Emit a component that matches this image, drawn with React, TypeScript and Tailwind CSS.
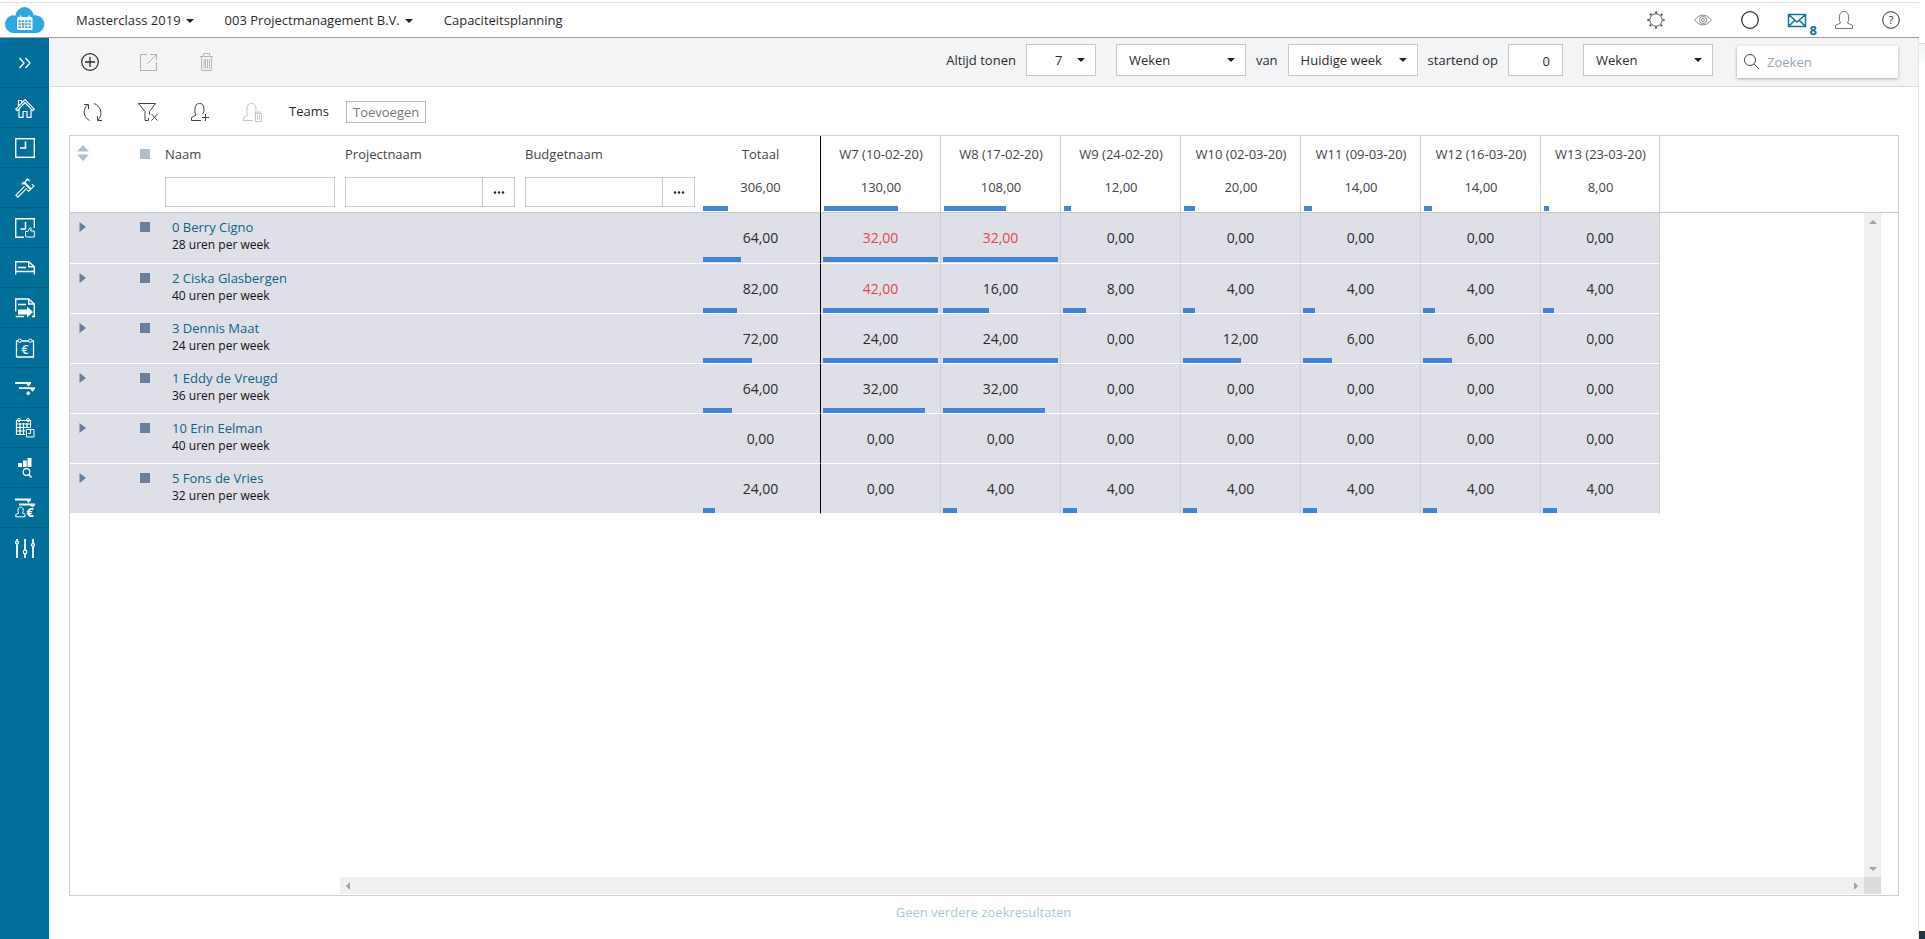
import type { ReactNode } from 'react'

const WEEKS = [
  'W7 (10-02-20)',
  'W8 (17-02-20)',
  'W9 (24-02-20)',
  'W10 (02-03-20)',
  'W11 (09-03-20)',
  'W12 (16-03-20)',
  'W13 (23-03-20)',
]

interface Employee {
  name: string
  capacity: number
  hours: number[]
}

const EMPLOYEES: Employee[] = [
  { name: '0 Berry Cigno', capacity: 28, hours: [32, 32, 0, 0, 0, 0, 0] },
  { name: '2 Ciska Glasbergen', capacity: 40, hours: [42, 16, 8, 4, 4, 4, 4] },
  { name: '3 Dennis Maat', capacity: 24, hours: [24, 24, 0, 12, 6, 6, 0] },
  { name: '1 Eddy de Vreugd', capacity: 36, hours: [32, 32, 0, 0, 0, 0, 0] },
  { name: '10 Erin Eelman', capacity: 40, hours: [0, 0, 0, 0, 0, 0, 0] },
  { name: '5 Fons de Vries', capacity: 32, hours: [0, 4, 4, 4, 4, 4, 4] },
]

const sum = (values: number[]) => values.reduce((a, b) => a + b, 0)
const format = (value: number) => value.toFixed(2).replace('.', ',')

const TOTAL_CAPACITY = sum(EMPLOYEES.map(e => e.capacity))
const WEEK_TOTALS = WEEKS.map((_, i) => sum(EMPLOYEES.map(e => e.hours[i])))

function Icon({ children, className = '' }: { children: ReactNode; className?: string }) {
  return (
    <svg viewBox="0 0 20 20" fill="none" stroke="currentColor" className={`size-5 ${className}`} aria-hidden="true">
      {children}
    </svg>
  )
}

function Caret({ className = '' }: { className?: string }) {
  return (
    <svg viewBox="0 0 8 4" className={`h-1 w-2 ${className}`} fill="#222" aria-hidden="true">
      <path d="M0 0h8L4 4z" />
    </svg>
  )
}

function Logo() {
  return (
    <svg viewBox="0 0 43 26" className="h-[26px] w-[43px]" aria-hidden="true">
      <path
        d="M9.500 26a9 9 0 0 1-1-17.500 9 9 0 0 1 4 .2A9.500 9.500 0 0 1 21.500 0a9.500 9.500 0 0 1 9.200 8.300A9 9 0 1 1 34 26z"
        fill="#29abe2"
      />
      <rect x="14" y="10" width="15.500" height="13" rx="1.500" fill="#fff" />
      <path d="M17.500 8.500v3M26 8.500v3" stroke="#fff" strokeWidth="1.500" />
      <path
        d="M15.500 14.300h12.500M15.500 17.200h12.500M15.500 20.100h12.500"
        stroke="#29abe2"
        strokeWidth="1.900"
        strokeDasharray="2.300 1"
      />
      <rect x="18.800" y="16" width="2.700" height="2.500" fill="#f47b20" />
    </svg>
  )
}

const NAV_ITEMS: { label: string; icon: ReactNode }[] = [
  {
    label: 'Start',
    icon: (
      <Icon>
        <path
          d="M.8 11.200 10 1.500l9.200 9.700-1.400 1.400L10 4.600l-7.800 8zM4 11v8.400h4V13.500h4v5.900h4V11M3.500 7.800V2.500h3v2"
          strokeWidth="1.200"
        />
      </Icon>
    ),
  },
  {
    label: 'Uren',
    icon: (
      <Icon>
        <rect x=".7" y=".7" width="18.600" height="18.600" strokeWidth="1.400" />
        <path d="M10.500 3.500V10H5" strokeWidth="1.600" />
      </Icon>
    ),
  },
  {
    label: 'Projecten',
    icon: (
      <Icon>
        <path
          d="M9.500 8.300.9 17.200l1.900 1.900 8.900-8.700M7.300 6.600 13 1M14 13.200l5-5.400M6.700 5.900l1.500-1.500 6.800 6.800M9.300 3.800l6.300 6.500M12.500.8l2.300 2.300M12.300 1l-1.500 1.500M17 6.300l2.300 1.900M14 13.500l-1.700-1.700"
          strokeWidth="1.200"
        />
      </Icon>
    ),
  },
  {
    label: 'Uren fiatteren',
    icon: (
      <Icon>
        <path d="M9 19.300H.7V.7h18.600V10" strokeWidth="1.400" />
        <path d="M10.500 4v7H5.500" strokeWidth="1.600" />
        <path d="M10.500 13.500h2.300l2.200-4 1.300.8-.6 2.700h3.600v6h-7l-1.800-.8z" />
      </Icon>
    ),
  },
  {
    label: 'Facturen',
    icon: (
      <Icon>
        <path d="M.7 16.500V3.700h13l5.600 5v7.800" strokeWidth="1.400" />
        <path d="M13.700 3.700v5h5.600M3 9.500h8M1 13.500h18" strokeWidth="1.400" />
      </Icon>
    ),
  },
  {
    label: 'Factuurvoorstellen',
    icon: (
      <Icon>
        <path d="M.7 13.500V1h13l5.600 5v12.500H17M.7 18.500H9" strokeWidth="1.400" />
        <path d="M13.700 1v5h5.600M3 6.500h8" strokeWidth="1.400" />
        <path d="M3 11.500h9V8.500l6 5.500-6 5.500v-3H3z" fill="currentColor" stroke="none" />
      </Icon>
    ),
  },
  {
    label: 'Kosten',
    icon: (
      <Icon>
        <path d="M3 3H1.500v16h17V3H17M6.500 3h7" strokeWidth="1.300" />
        <circle cx="4.700" cy="2.700" r="1.700" />
        <circle cx="15.300" cy="2.700" r="1.700" />
        <text x="10" y="16" textAnchor="middle" fontSize="12" fontWeight="600" fill="currentColor" stroke="none">
          €
        </text>
      </Icon>
    ),
  },
  {
    label: 'Planning',
    icon: (
      <Icon>
        <path d="M0 5h16M4 10.200h16" strokeWidth="1.800" />
        <path
          d="M11 5.500h5L13.500 8.500zM15 11h5l-2.500 2.800zM13.200 13l2.300 2.300-2.300 2.200-2.200-2.200z"
          fill="currentColor"
          stroke="none"
        />
      </Icon>
    ),
  },
  {
    label: 'Kalender',
    icon: (
      <Icon>
        <path
          d="M1.500 16.500v-14h14v7M1.500 6h14M1.500 9.500h14M1.500 13h9M1.500 16.500h9M5 5v11.500M8.500 5v11.500M12 5v5"
          strokeWidth="1.200"
        />
        <circle cx="4" cy="2" r="1.500" />
        <circle cx="13" cy="2" r="1.500" />
        <path d="M11.500 11.500h7.500v7.500h-7.500zM15.500 12v3.500h-2.500" />
      </Icon>
    ),
  },
  {
    label: 'Analyse',
    icon: (
      <Icon>
        <path d="M3 5h4v4H3zM8 2.500h3.700V9H8zM12.500 0h4v9h-4z" fill="currentColor" stroke="none" />
        <circle cx="11.500" cy="14" r="3.300" strokeWidth="1.200" />
        <path d="m13.800 16.500 2.700 3" strokeWidth="1.500" />
      </Icon>
    ),
  },
  {
    label: 'Capaciteit',
    icon: (
      <Icon className="overflow-visible">
        <path d="M0 1.500h16M4 6.500h16" strokeWidth="1.800" />
        <path d="M11 2h5l-2.500 3zM15 7h5l-2.500 2.500z" fill="currentColor" stroke="none" />
        <path d="M.8 18.800v-2.300l3-1.500a4 4 0 0 1-.8-2.800c0-2 1-3 2.600-3s2.600 1 2.600 3a4 4 0 0 1-.8 2.800l2.600 1.300v2.500z" />
        <text x="15" y="18.500" textAnchor="middle" fontSize="13" fontWeight="700" fill="currentColor" stroke="none">
          €
        </text>
      </Icon>
    ),
  },
  {
    label: 'Instellingen',
    icon: (
      <Icon>
        <path d="M2 6.500V20M2 1v1.500M10 1v11M10 16v4M18 1v4M18 9v11" strokeWidth="1.800" />
        <circle cx="2" cy="4.500" r="1.500" strokeWidth="1.300" />
        <circle cx="10" cy="14" r="1.800" strokeWidth="1.300" />
        <circle cx="18" cy="7" r="1.500" strokeWidth="1.300" />
      </Icon>
    ),
  },
]

const PERSON = 'M1.500 18.500v-3l5-2.500A7 7 0 0 1 5.500 7c0-3.700 1.500-5.500 4.500-5.500s4.500 1.800 4.500 5.500a7 7 0 0 1-1 6l5 2.500v3z'
const PERSON_CUT = 'M11 18.500H1.500v-3l4.500-2.500A7 7 0 0 1 5 7c0-3.700 1.500-5.500 4.500-5.500S14 3.300 14 7a7 7 0 0 1-1.500 5.300'

function Header() {
  return (
    <header className="mt-0.5 flex h-9 items-center border-y border-t-[#dcdfe5] border-b-[#9c9c9c]">
      <a href="#" aria-label="Start" className="ml-[3px] w-[73px]">
        <Logo />
      </a>
      <div className="flex items-center gap-[31px] pt-0.5">
        <button type="button" className="flex items-center gap-[5px]">
          Masterclass 2019
          <Caret />
        </button>
        <button type="button" className="flex items-center gap-[5px]">
          003 Projectmanagement B.V.
          <Caret />
        </button>
        <span>Capaciteitsplanning</span>
      </div>
      <div className="ml-auto mr-[18px] flex items-center gap-[27px]">
        <button type="button" aria-label="Instellingen" className="text-[#444]">
          <Icon>
            <circle cx="10" cy="10" r="6.200" strokeWidth=".9" />
            <circle cx="10" cy="10" r="7.700" strokeWidth="1.800" strokeDasharray="2 4.047" strokeDashoffset="1" />
          </Icon>
        </button>
        <button type="button" aria-label="Weergave" className="text-[#8a8a8a]">
          <Icon>
            <path d="M1.500 10Q5.500 5 10 5t8.500 5q-4 5-8.500 5T1.500 10z" />
            <circle cx="10" cy="10" r="3.500" />
            <circle cx="10" cy="10" r="1.500" />
          </Icon>
        </button>
        <button type="button" aria-label="Status">
          <Icon>
            <circle cx="10" cy="10" r="8.300" strokeWidth="1.200" />
          </Icon>
        </button>
        <button type="button" aria-label="Berichten" className="relative text-[#1272a0]">
          <Icon>
            <path d="M1.500 4.500h17v12h-17zM2 5l8 7 8-7M2 16l6-6M18 16l-6-6" strokeWidth="1.500" />
          </Icon>
          <span className="absolute -right-2.5 top-3 font-bold leading-4">8</span>
        </button>
        <button type="button" aria-label="Profiel" className="text-[#777]">
          <Icon>
            <path d={PERSON} />
          </Icon>
        </button>
        <button type="button" aria-label="Help">
          <Icon>
            <circle cx="10" cy="10" r="8.300" />
            <text x="10" y="14" textAnchor="middle" fontSize="11" fill="currentColor" stroke="none">
              ?
            </text>
          </Icon>
        </button>
      </div>
    </header>
  )
}

function Sidebar() {
  return (
    <nav className="w-[49px] shrink-0 bg-[#006f99] text-white">
      <button
        type="button"
        aria-label="Menu uitklappen"
        className="flex h-[50px] w-full items-center justify-center border-b border-[#005f86]"
      >
        <Icon>
          <path d="m4.500 5 4.500 5-4.500 5M10.500 5l4.500 5-4.500 5" strokeWidth="1.300" />
        </Icon>
      </button>
      {NAV_ITEMS.map(item => (
        <a
          key={item.label}
          href="#"
          aria-label={item.label}
          className="flex h-10 items-center justify-center border-b border-[#005f86] last:border-b-0"
        >
          {item.icon}
        </a>
      ))}
    </nav>
  )
}

interface SelectProps {
  label: string
  options: string[]
  className: string
  padding?: string
}

function Select({ label, options, className, padding = 'pl-3' }: SelectProps) {
  return (
    <span className={`grid h-8 items-center ${className}`}>
      <select
        aria-label={label}
        className={`col-start-1 row-start-1 h-8 w-full appearance-none border border-[#c8c8c8] bg-white pt-0.5 ${padding}`}
      >
        {options.map(option => (
          <option key={option}>{option}</option>
        ))}
      </select>
      <Caret className="pointer-events-none col-start-1 row-start-1 mr-[11px] justify-self-end" />
    </span>
  )
}

function Toolbar() {
  return (
    <div className="ml-px flex h-[49px] items-center border-b border-[#d6dbe1] bg-[#f3f4f6]">
      <div className="ml-[30px] flex items-center gap-[38px]">
        <button type="button" aria-label="Nieuw">
          <Icon>
            <circle cx="10" cy="10" r="8.300" strokeWidth="1.200" />
            <path d="M10 5v10M5 10h10" strokeWidth="1.300" />
          </Icon>
        </button>
        <button type="button" aria-label="Openen" disabled className="text-[#b0b0b0]">
          <Icon>
            <path d="M9 2.500H2.500v16h16V10M12 2.500h6.500V8M18 3 9 12" />
          </Icon>
        </button>
        <button type="button" aria-label="Verwijderen" disabled className="text-[#b8b8b8]">
          <Icon>
            <path d="M4 4.500h13M7.500 4V1.500h6V4M5.500 5v13.500h10V5M8 7v9.500M9.500 7v9.500M11.500 7v9.500M13.500 7v9.500" />
          </Icon>
        </button>
      </div>
      <div className="mb-1 ml-auto mr-5 flex items-center gap-2.5">
        <span className="pt-0.5">Altijd tonen</span>
        <Select label="Altijd tonen" options={['7']} className="w-[70px]" padding="pl-7" />
        <Select label="Eenheid" options={['Weken']} className="ml-2.5 w-[130px]" />
        <span className="pt-0.5">van</span>
        <Select label="van" options={['Huidige week']} className="w-[130px]" />
        <label htmlFor="offset" className="pt-0.5">
          startend op
        </label>
        <input
          id="offset"
          type="text"
          defaultValue="0"
          className="h-8 w-[55px] border border-[#c8c8c8] bg-white pr-3 pt-0.5 text-right"
        />
        <Select label="Eenheid startpunt" options={['Weken']} className="ml-2.5 w-[130px]" />
        <div className="ml-3.5 mt-[3px] flex h-8 w-[161px] items-center bg-white pl-1.5 shadow-[0_1px_3px_#aaa]">
          <Icon className="shrink-0 text-[#444]">
            <circle cx="7" cy="8" r="5.500" />
            <path d="m11 12 5 5" />
          </Icon>
          <input
            type="search"
            aria-label="Zoeken"
            placeholder="Zoeken"
            className="ml-1 w-full min-w-0 pt-0.5 outline-none placeholder:text-[#94a3b8]"
          />
        </div>
      </div>
    </div>
  )
}

function FilterBar() {
  return (
    <div className="flex h-12 items-center pl-[34px] pt-0.5">
      <button type="button" aria-label="Vernieuwen" className="text-[#444]">
        <Icon>
          <path d="M4.500 3C-.5 7 0 15 6.500 18.500M15 18C20 13.500 18.500 4 11 1.500M1 2.500h4.500V7M19 18.500h-4.500V14" />
        </Icon>
      </button>
      <button type="button" aria-label="Filter wissen" className="ml-[35px] text-[#444]">
        <Icon>
          <path d="M.5 1.500h17L11.500 9.500v3M.5 1.500 7 9.500v9h3.500v-2.500M13.500 12l6 6.500M19.500 12l-6 6.500" />
        </Icon>
      </button>
      <button type="button" aria-label="Medewerker toevoegen" className="ml-8 text-[#444]">
        <Icon>
          <path d={PERSON_CUT} />
          <path d="M12 15.500h7M15.500 12v7" />
        </Icon>
      </button>
      <button type="button" aria-label="Medewerker verwijderen" disabled className="ml-8 text-[#c8c8c8]">
        <Icon>
          <path d={PERSON_CUT} />
          <path d="M13 11.500h7M15 11v-1h3v1M13.500 12v7.500h6V12M15.500 13v5M17.500 13v5" />
        </Icon>
      </button>
      <span className="ml-[27px] w-[57px]">Teams</span>
      <button type="button" className="h-[22px] border border-[#bbb] px-1.5 leading-5 text-[#777]">
        Toevoegen
      </button>
    </div>
  )
}

function Bar({ value, capacity }: { value: number; capacity: number }) {
  const width = Math.min((value / capacity) * 100, 100)
  return <div className="mt-auto h-[5px] bg-[#4083d8]" style={{ width: `${width}%` }} />
}

function SearchField({ label, lookup }: { label: string; lookup?: boolean }) {
  return (
    <div className="flex h-[76px] flex-col pl-[5px] pt-2 text-left">
      <span className="leading-5">{label}</span>
      <div className="mt-[13px] flex h-[30px] w-[170px] border border-[#c8c8c8]">
        <input type="text" aria-label={label} className="min-w-0 flex-1 px-2 outline-none" />
        {lookup && (
          <button
            type="button"
            aria-label={`${label} zoeken`}
            className="flex w-8 items-center justify-center border-l border-[#c8c8c8]"
          >
            <svg viewBox="0 0 12 3" className="h-[3px] w-3" fill="#222" aria-hidden="true">
              <circle cx="2" cy="1.500" r="1.200" />
              <circle cx="6" cy="1.500" r="1.200" />
              <circle cx="10" cy="1.500" r="1.200" />
            </svg>
          </button>
        )}
      </div>
    </div>
  )
}

function PlanningTable() {
  const headLine = 'border-b border-b-[#cbcbcb] p-0 font-normal'
  return (
    <table className="w-full table-fixed border-separate border-spacing-0">
      <colgroup>
        <col className="w-[50px]" />
        <col className="w-10" />
        <col className="w-[180px]" />
        <col className="w-[180px]" />
        <col className="w-[181px]" />
        {['Totaal', ...WEEKS].map((key, i) => (
          <col key={key} className={i < WEEKS.length ? 'w-[120px]' : 'w-[119px]'} />
        ))}
        <col />
      </colgroup>
      <thead>
        <tr className="align-top text-[#444]">
          <th className={headLine}>
            <button type="button" aria-label="Sorteren" className="ml-[7px] mt-[9px] block">
              <svg viewBox="0 0 12 16" className="h-4 w-3" fill="#b1bdca" aria-hidden="true">
                <path d="M6 0l6 6.500H0zM6 16l6-6.500H0z" />
              </svg>
            </button>
          </th>
          <th className={headLine}>
            <input
              type="checkbox"
              aria-label="Alles selecteren"
              className="ml-5 mt-[13px] block size-2.5 appearance-none bg-[#b1bdca]"
            />
          </th>
          <th className={headLine}>
            <SearchField label="Naam" />
          </th>
          <th className={headLine}>
            <SearchField label="Projectnaam" lookup />
          </th>
          <th className={headLine}>
            <SearchField label="Budgetnaam" lookup />
          </th>
          <th className={`${headLine} border-r border-r-black`}>
            <div className="flex h-[76px] flex-col px-0.5 pb-px pt-2">
              <span className="leading-5">Totaal</span>
              <span className="mt-[13px] leading-5">{format(sum(WEEK_TOTALS))}</span>
              <Bar value={sum(WEEK_TOTALS)} capacity={TOTAL_CAPACITY * WEEKS.length} />
            </div>
          </th>
          {WEEKS.map((week, i) => (
            <th key={week} className={`${headLine} border-r border-r-[#cfcfcf]`}>
              <div className="flex h-[76px] flex-col pb-px pl-[3px] pr-0.5 pt-2">
                <span className="leading-5">{week}</span>
                <span className="mt-[13px] leading-5">{format(WEEK_TOTALS[i])}</span>
                <Bar value={WEEK_TOTALS[i]} capacity={TOTAL_CAPACITY} />
              </div>
            </th>
          ))}
          <td className={headLine} />
        </tr>
      </thead>
      <tbody>
        {EMPLOYEES.map(employee => (
          <tr
            key={employee.name}
            className="group align-top *:not-last:border-b *:not-last:border-b-white *:not-last:bg-[#dfdfe7] *:p-0"
          >
            <td>
              <button type="button" aria-label={`${employee.name} uitklappen`} className="ml-[9px] mt-[9px] block">
                <svg viewBox="0 0 7 10" className="h-2.5 w-[7px]" fill="#6a7f9b" aria-hidden="true">
                  <path d="M.5 0 7 5 .5 10z" />
                </svg>
              </button>
            </td>
            <td>
              <input
                type="checkbox"
                aria-label={employee.name}
                className="ml-5 mt-[9px] block size-2.5 appearance-none bg-[#6a7f9b]"
              />
            </td>
            <td colSpan={3}>
              <div className="flex flex-col items-start pl-3 pt-[5px]">
                <a href="#" className="leading-[18px] text-[#0b6587]">
                  {employee.name}
                </a>
                <span className="text-xs leading-[18px] text-[#111]">{employee.capacity} uren per week</span>
              </div>
            </td>
            <td className="border-r border-r-black">
              <div className="flex h-[49px] flex-col px-0.5 pt-[15px] text-center text-sm leading-5 group-first:h-[50px] group-first:pb-px">
                <span>{format(sum(employee.hours))}</span>
                <Bar value={sum(employee.hours)} capacity={employee.capacity * WEEKS.length} />
              </div>
            </td>
            {employee.hours.map((hours, i) => (
              <td key={WEEKS[i]} className="border-r border-r-[#cfcfcf]">
                <div className="flex h-[49px] flex-col px-0.5 pt-[15px] text-center text-sm leading-5 group-first:h-[50px] group-first:pb-px">
                  <span className={hours > employee.capacity ? 'text-[#e8444a]' : ''}>{format(hours)}</span>
                  <Bar value={hours} capacity={employee.capacity} />
                </div>
              </td>
            ))}
            <td />
          </tr>
        ))}
      </tbody>
    </table>
  )
}

function Arrow({ path }: { path: string }) {
  return (
    <svg viewBox="0 0 8 8" className="size-2" fill="#a3a3a3" aria-hidden="true">
      <path d={path} />
    </svg>
  )
}

export default function App() {
  return (
    <div className="flex min-h-screen bg-white font-['Open_Sans','Noto_Sans',sans-serif] text-[13px] text-[#2b2b2b]">
      <div className="flex min-w-0 flex-1 flex-col">
        <Header />
        <div className="flex flex-1">
          <Sidebar />
          <main className="flex min-w-0 flex-1 flex-col border-r border-[#e6e6e6]">
            <Toolbar />
            <FilterBar />
            <section className="ml-5 mr-[19px] flex flex-1 flex-col border border-[#d0d0d0] pb-px">
              <div className="flex flex-1">
                <div className="min-w-0 flex-1">
                  <PlanningTable />
                </div>
                <div className="flex w-[34px] flex-col">
                  <div className="h-[77px] border-b border-[#cbcbcb]" />
                  <div className="flex w-[17px] flex-1 flex-col items-center justify-between bg-[#f0f0f0] py-1">
                    <Arrow path="M4 3l4 4H0z" />
                    <Arrow path="M4 6l4-4H0z" />
                  </div>
                </div>
              </div>
              <div className="ml-[270px] mr-[17px] flex h-[17px] bg-[#f0f0f0]">
                <div className="flex flex-1 items-center justify-between px-1">
                  <Arrow path="M2 4l4-4v8z" />
                  <Arrow path="M6 4L2 0v8z" />
                </div>
                <div className="w-[17px] bg-[#dcdcdc]" />
              </div>
            </section>
            <p className="h-[43px] pt-1.5 text-center leading-5 text-[#a9c8d4]">Geen verdere zoekresultaten</p>
          </main>
        </div>
      </div>
      <div className="flex w-1.5 flex-col pt-[43px]">
        <div className="flex-1 border-t border-[#cfd8df] bg-linear-to-b from-[#f1f4f6] to-white to-[24px]" />
        <div className="h-2 bg-[#1f3640]" />
      </div>
    </div>
  )
}
